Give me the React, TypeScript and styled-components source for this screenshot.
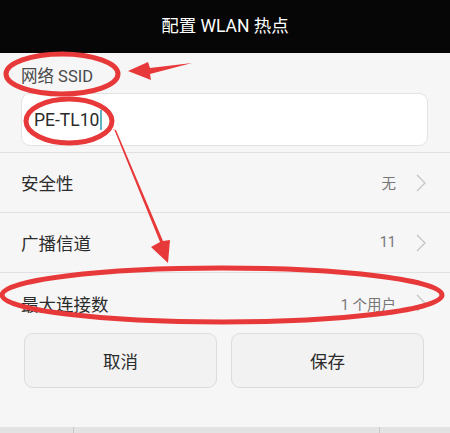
import React from 'react'
import styled, { createGlobalStyle } from 'styled-components'

const GlobalStyle = createGlobalStyle`
  html, body {
    margin: 0;
    padding: 0;
    background: #f6f6f6;
  }
  body {
    font-family: Roboto, "Noto Sans CJK SC", sans-serif;
  }
`

const Screen = styled.div`
  position: relative;
  width: 450px;
  height: 433px;
  overflow: hidden;
  background: #f6f6f6;
  display: flex;
  flex-direction: column;
`

const TitleBar = styled.div`
  height: 53px;
  background: #060606;
  color: #fff;
  font-size: 17.5px;
  display: flex;
  align-items: center;
  justify-content: center;
  padding-bottom: 4px;
  box-sizing: border-box;
`

const FieldLabel = styled.div`
  height: 40px;
  padding: 0 21px;
  display: flex;
  align-items: center;
  font-size: 16.5px;
  color: #4a4a4a;
  padding-top: 4px;
  box-sizing: border-box;
`

const InputBox = styled.div`
  margin: 0 22px 0 21px;
  height: 53px;
  box-sizing: border-box;
  background: #fff;
  border: 1px solid #e3e3e3;
  border-radius: 9px;
  display: flex;
  align-items: center;
  padding-left: 12px;
  font-size: 17.5px;
  color: #2a2a2a;
`

const Cursor = styled.span`
  display: inline-block;
  width: 2px;
  height: 20px;
  background: #5fb3c3;
  margin-left: 1px;
`

const List = styled.div`
  margin-top: 6px;
  display: flex;
  flex-direction: column;
`

const Row = styled.div<{ $last?: boolean }>`
  height: ${p => p.$last ? 61 : 60}px;
  box-sizing: border-box;
  border-top: 1px solid #e1e1e1;
  display: flex;
  align-items: center;
  padding: 0 24px 0 21px;
`

const RowTitle = styled.span`
  flex: 1;
  font-size: 17.5px;
  color: #2b2b2b;
`

const RowValue = styled.span`
  font-size: 14.5px;
  color: #777;
  margin-right: 20px;
`

const Buttons = styled.div`
  display: grid;
  grid-template-columns: 1fr 1fr;
  gap: 14px;
  padding: 0 26px 0 24px;
`

const Button = styled.div`
  height: 55px;
  box-sizing: border-box;
  border: 1px solid #dcdcdc;
  border-radius: 9px;
  background: #f2f2f2;
  display: flex;
  align-items: center;
  justify-content: center;
  font-size: 17.5px;
  color: #2b2b2b;
`

const Spacer = styled.div`
  flex: 1;
`

const BottomBar = styled.div`
  height: 6px;
  background: #e3e3e3;
  display: grid;
  grid-template-columns: 74px 306px 1fr;
`

const BarCell = styled.div`
  border-right: 1px solid #c8c8c8;
  &:last-child { border-right: none; }
`

const Overlay = styled.svg`
  position: absolute;
  left: 0;
  top: 0;
  pointer-events: none;
`

const Chevron = () => (
  <svg width='10' height='18' viewBox='0 0 10 18'>
    <path d='M1 1 L9 9 L1 17' fill='none' stroke='#c4c4c4' strokeWidth='1.3' />
  </svg>
)

const rows = [
  { title: '安全性', value: '无' },
  { title: '广播信道', value: '11' },
  { title: '最大连接数', value: '1 个用户' }
]

export default function App () {
  return (
    <Screen>
      <GlobalStyle />
      <TitleBar>配置 WLAN 热点</TitleBar>
      <FieldLabel>网络 SSID</FieldLabel>
      <InputBox>PE-TL10<Cursor /></InputBox>
      <List>
        {rows.map((r, i) => (
          <Row key={r.title} $last={i === rows.length - 1}>
            <RowTitle>{r.title}</RowTitle>
            <RowValue>{r.value}</RowValue>
            <Chevron />
          </Row>
        ))}
      </List>
      <Buttons>
        <Button>取消</Button>
        <Button>保存</Button>
      </Buttons>
      <Spacer />
      <BottomBar>
        <BarCell />
        <BarCell />
        <BarCell />
      </BottomBar>

      <Overlay width='450' height='433' viewBox='0 0 450 433'>
        <g fill='none' stroke='#e8393a' strokeWidth='5'>
          <ellipse cx='62' cy='74' rx='56' ry='20' />
          <ellipse cx='69' cy='121' rx='43' ry='22' />
          <ellipse cx='222' cy='295' rx='220' ry='27' />
        </g>
        <g fill='#e8393a'>
          <polygon points='192,63 150,68 148,62 128,71 151,80 150,74' />
          <polygon points='113,130 114,129 160,242 151,247 168,263 170,240 163,241 116,130' />
        </g>
      </Overlay>
    </Screen>
  )
}
